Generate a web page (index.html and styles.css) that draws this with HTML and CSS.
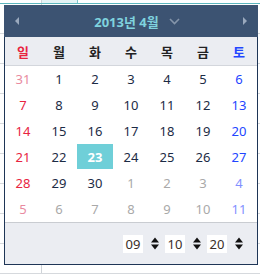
FILE: index.html
```html
<!DOCTYPE html>
<html lang="ko">
<head>
    <meta charset="UTF-8">
    <meta name="viewport" content="width=device-width, initial-scale=1.0">
    <title>Datepicker</title>
    <link rel="stylesheet" href="styles.css">
</head>
<body>
    <!-- page behind the popup: an input row and a table -->
    <div class="page">
        <div class="topbar">
            <span class="cell-label"></span>
            <span class="cell-input"></span>
        </div>
        <div class="rows">
            <div class="row"></div><div class="row"></div><div class="row"></div>
            <div class="row"></div><div class="row"></div><div class="row"></div>
            <div class="row"></div><div class="row"></div><div class="row"></div>
        </div>
    </div>

    <!-- datepicker popup -->
    <div class="datepicker">
        <div class="dp-header">
            <span class="dp-prev"></span>
            <span class="dp-title">2013년 4월
                <svg class="dp-caret" width="11" height="7" viewBox="0 0 11 7"><path d="M1 1 L5.5 5.5 L10 1" fill="none" stroke="#8595aa" stroke-width="1.6"/></svg>
            </span>
            <span class="dp-next"></span>
        </div>

        <table class="dp-table">
            <thead>
                <tr>
                    <th class="sun">일</th><th>월</th><th>화</th><th>수</th><th>목</th><th>금</th><th class="sat">토</th>
                </tr>
            </thead>
            <tbody>
                <tr>
                    <td class="sun old">31</td><td>1</td><td>2</td><td>3</td><td>4</td><td>5</td><td class="sat">6</td>
                </tr>
                <tr>
                    <td class="sun">7</td><td>8</td><td>9</td><td>10</td><td>11</td><td>12</td><td class="sat">13</td>
                </tr>
                <tr>
                    <td class="sun">14</td><td>15</td><td>16</td><td>17</td><td>18</td><td>19</td><td class="sat">20</td>
                </tr>
                <tr>
                    <td class="sun">21</td><td>22</td><td class="active">23</td><td>24</td><td>25</td><td>26</td><td class="sat">27</td>
                </tr>
                <tr>
                    <td class="sun">28</td><td>29</td><td>30</td><td class="old">1</td><td class="old">2</td><td class="old">3</td><td class="sat old">4</td>
                </tr>
                <tr>
                    <td class="sun old">5</td><td class="old">6</td><td class="old">7</td><td class="old">8</td><td class="old">9</td><td class="old">10</td><td class="sat old">11</td>
                </tr>
            </tbody>
        </table>

        <!-- time selects -->
        <div class="dp-footer">
            <span class="time-box">09</span>
            <svg class="spin" width="8" height="13" viewBox="0 0 8 13"><path d="M0 5.5 L4 0.5 L8 5.5 Z M0 7.5 L4 12.5 L8 7.5 Z" fill="#111"/></svg>
            <span class="time-box">10</span>
            <svg class="spin" width="8" height="13" viewBox="0 0 8 13"><path d="M0 5.5 L4 0.5 L8 5.5 Z M0 7.5 L4 12.5 L8 7.5 Z" fill="#111"/></svg>
            <span class="time-box">20</span>
            <svg class="spin" width="8" height="13" viewBox="0 0 8 13"><path d="M0 5.5 L4 0.5 L8 5.5 Z M0 7.5 L4 12.5 L8 7.5 Z" fill="#111"/></svg>
        </div>
    </div>
</body>
</html>
```

FILE: styles.css
```css
/* basic page */
body {
    margin: 0;
    background: #fff;
    font-family: "Noto Sans", "Noto Sans CJK KR", sans-serif;
}

.page {
    position: relative;
    width: 260px;
    height: 274px;
    overflow: hidden;
}

/* input row behind the popup */
.topbar {
    display: flex;
    height: 3px;
    border-bottom: 1px solid #5db7bf;
}

.cell-label {
    width: 41px;
    border-right: 1px solid #cfd3d8;
}

.cell-input {
    width: 35px;
    background: #e4f3f5;
    border-right: 1px solid #7fc6cc;
}

.rows {
    border-left: 41px solid transparent;
    box-shadow: inset 1px 0 0 #cfd3d8;
}

.row {
    height: 29px;
    border-bottom: 1px solid #d6d9dd;
    margin-left: -41px;
}

/* popup */
.datepicker {
    position: absolute;
    left: 4px;
    top: 5px;
    width: 254px;
    box-sizing: border-box;
    border: 1px solid #1e3556;
    border-top: none;
    background: #fff;
}

.dp-header {
    display: flex;
    align-items: center;
    justify-content: space-between;
    height: 32px;
    margin: 0 -1px;
    padding: 0 11px;
    background: #3c5372;
}

.dp-prev,
.dp-next {
    width: 0;
    height: 0;
    border-top: 4px solid transparent;
    border-bottom: 4px solid transparent;
}

.dp-prev {
    border-right: 4px solid #9aa9bd;
}

.dp-next {
    border-left: 4px solid #9aa9bd;
}

.dp-title {
    display: flex;
    align-items: center;
    gap: 10px;
    margin-left: 12px;
    color: #7fd2de;
    font-size: 13px;
    font-weight: bold;
}

.dp-table {
    width: 252px;
    border-collapse: collapse;
    table-layout: fixed;
}

.dp-table th {
    height: 28px;
    background: #ebedf2;
    border-bottom: 1px solid #d3d6dc;
    color: #222;
    font-size: 13px;
    font-weight: bold;
    padding: 0;
}

.dp-table td {
    height: 25px;
    padding: 0;
    text-align: center;
    color: #1c2b45;
    font-size: 13px;
    border-top: 1px solid #fff;
    border-bottom: 1px solid #fff;
}

.dp-table .sun {
    color: #e8243f;
}

.dp-table .sat {
    color: #2245ff;
}

.dp-table td.old {
    color: #a9a9a9;
}

.dp-table td.sun.old {
    color: #e98aa0;
}

.dp-table td.sat.old {
    color: #8290ff;
}

.dp-table td.active {
    background: #6fcfd8;
    color: #fff;
    font-weight: bold;
}

/* footer with time */
.dp-footer {
    display: flex;
    align-items: center;
    justify-content: flex-end;
    height: 41px;
    padding-right: 14px;
    background: #ebedf2;
    border-top: 1px solid #c9ccd1;
}

.time-box {
    width: 20px;
    height: 18px;
    line-height: 18px;
    background: #fff;
    color: #3a2e28;
    font-size: 13px;
    text-align: center;
    margin-left: 6px;
}

.spin {
    margin-left: 8px;
}
```
